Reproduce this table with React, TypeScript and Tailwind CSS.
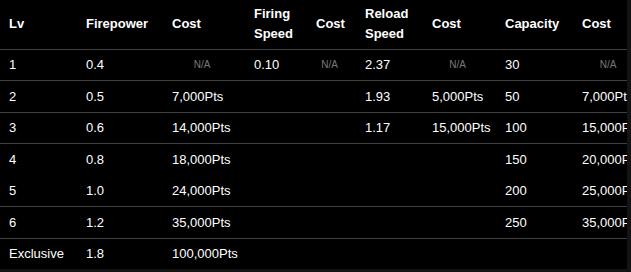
import React from "react";

type Cell = string | null;

const headers = [
  "Lv",
  "Firepower",
  "Cost",
  "Firing Speed",
  "Cost",
  "Reload Speed",
  "Cost",
  "Capacity",
  "Cost",
];

const widths = [77, 86, 82, 62, 49, 67, 73, 77, 74];

const rows: { cells: Cell[]; border: boolean }[] = [
  { cells: ["1", "0.4", "N/A", "0.10", "N/A", "2.37", "N/A", "30", "N/A"], border: true },
  { cells: ["2", "0.5", "7,000Pts", "", "", "1.93", "5,000Pts", "50", "7,000Pts"], border: true },
  { cells: ["3", "0.6", "14,000Pts", "", "", "1.17", "15,000Pts", "100", "15,000Pts"], border: true },
  { cells: ["4", "0.8", "18,000Pts", "", "", "", "", "150", "20,000Pts"], border: false },
  { cells: ["5", "1.0", "24,000Pts", "", "", "", "", "200", "25,000Pts"], border: true },
  { cells: ["6", "1.2", "35,000Pts", "", "", "", "", "250", "35,000Pts"], border: true },
  { cells: ["Exclusive", "1.8", "100,000Pts", "", "", "", "", "", ""], border: false },
];

function BodyCell({ value }: { value: Cell }) {
  if (value === "N/A") {
    return (
      <td className="h-[31.5px] pl-[9px] pr-[13px] text-center align-middle text-[10px] text-[#7a7a7a] whitespace-nowrap">
        N/A
      </td>
    );
  }
  return (
    <td className="h-[31.5px] pl-[9px] pr-[13px] text-left align-middle text-[13px] text-white whitespace-nowrap overflow-hidden">
      {value}
    </td>
  );
}

export default function App() {
  return (
    <div
      className="w-[631px] h-[272px] bg-[#141414] overflow-hidden"
      style={{ fontFamily: '"Liberation Sans", Arial, sans-serif' }}
    >
      <div className="w-[627px] h-[269px] bg-black overflow-hidden">
        <table className="table-fixed border-collapse w-[647px]">
          <colgroup>
            {widths.map((w, i) => (
              <col key={i} style={{ width: w }} />
            ))}
          </colgroup>
          <thead>
            <tr className="border-b border-[#404040]">
              {headers.map((h, i) => (
                <th
                  key={i}
                  className="h-[49px] pl-[9px] pr-[4px] text-left align-middle text-[13px] font-bold leading-[20px] text-white"
                >
                  {h}
                </th>
              ))}
            </tr>
          </thead>
          <tbody>
            {rows.map((r, i) => (
              <tr
                key={i}
                className={r.border ? "border-b border-[#404040]" : ""}
              >
                {r.cells.map((c, j) => (
                  <BodyCell key={j} value={c} />
                ))}
              </tr>
            ))}
          </tbody>
        </table>
      </div>
    </div>
  );
}
